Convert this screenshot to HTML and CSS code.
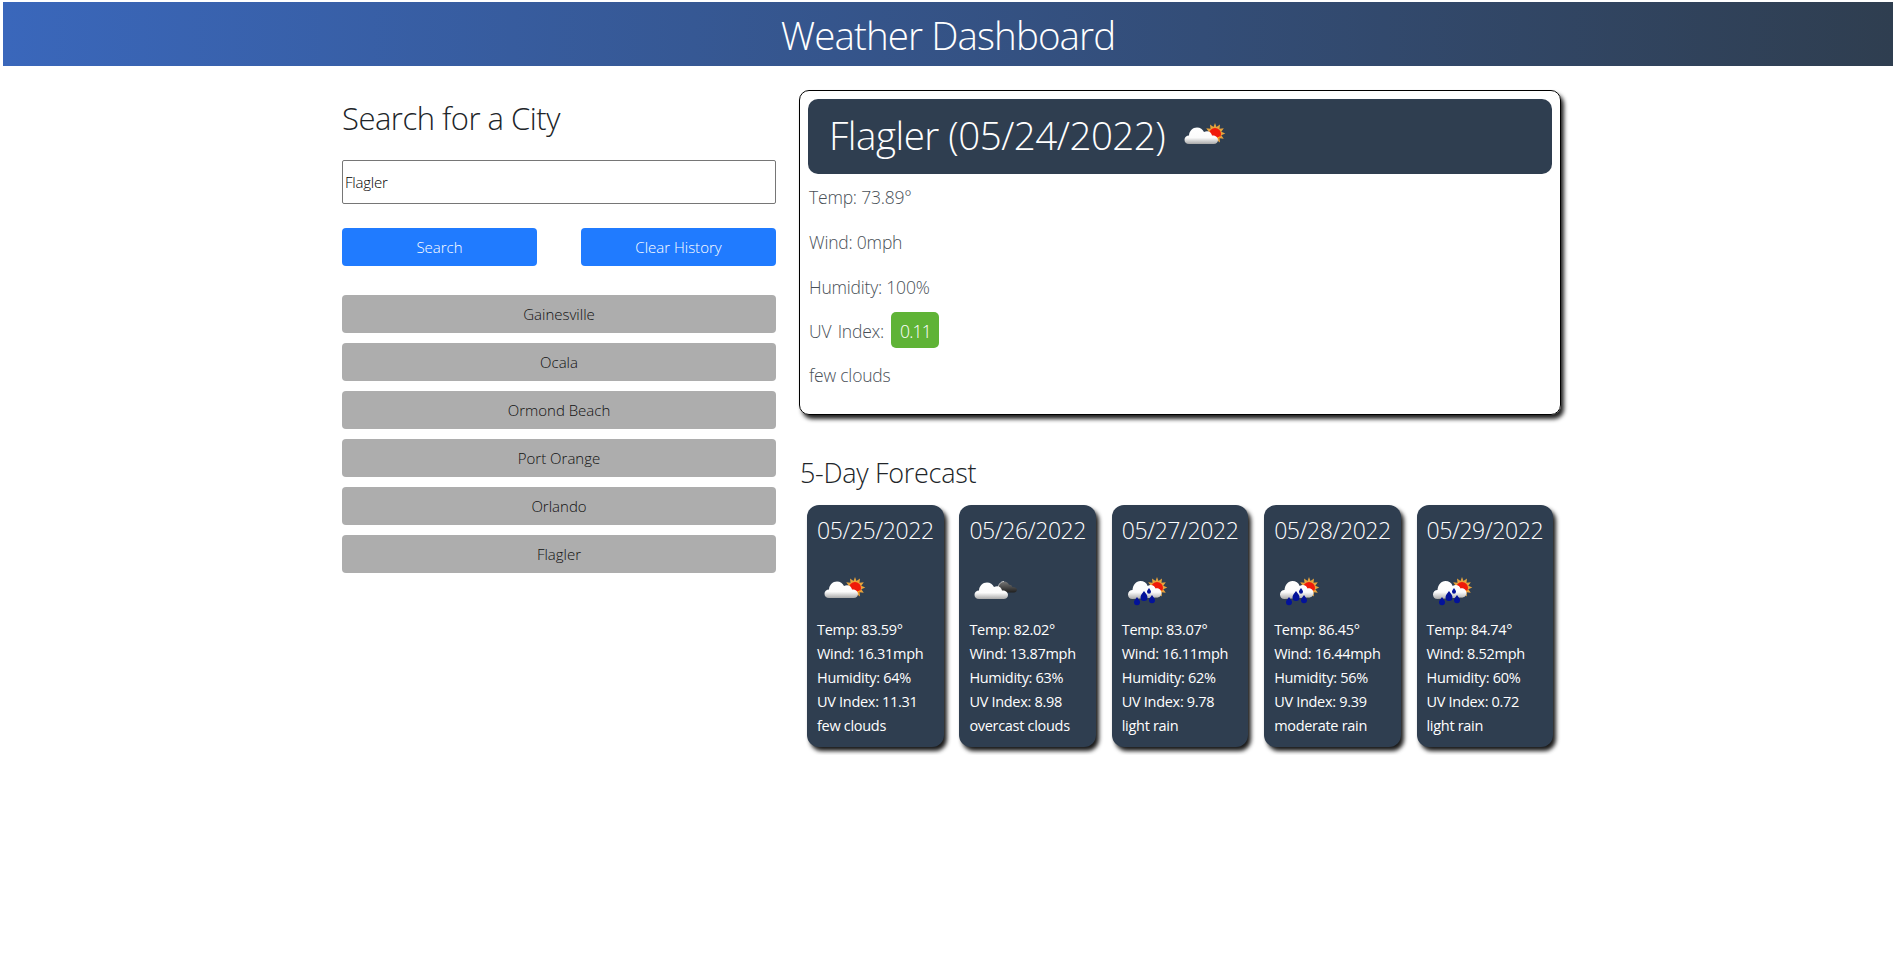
FILE: index.html
```html
<!DOCTYPE html>
<html lang="en">
<head>
    <meta charset="UTF-8">
    <title>Weather Dashboard</title>
    <link rel="stylesheet" href="styles.css">
</head>
<body>

<svg class="icon-defs" width="0" height="0" aria-hidden="true">
    <defs>
        <linearGradient id="cloudWhite" x1="0" y1="0" x2="0" y2="1">
            <stop offset="0" stop-color="#ffffff"/>
            <stop offset="0.62" stop-color="#fbfbfb"/>
            <stop offset="1" stop-color="#a9a9a9"/>
        </linearGradient>
        <linearGradient id="cloudDark" x1="0" y1="0" x2="0" y2="1">
            <stop offset="0" stop-color="#777777"/>
            <stop offset="1" stop-color="#1f1f1f"/>
        </linearGradient>
        <symbol id="sun" viewBox="0 0 50 50">
            <path fill="#e8a33c" d="M38 12l1.500 4 3.500-2.500-.5 4.300 4.300-.5-2.500 3.500 4 1.700-4 1.700 2.500 3.500-4.300-.5.500 4.300-3.500-2.500-1.500 4-1.500-4-3.500 2.500.5-4.300-4.300.5 2.500-3.500-4-1.700 4-1.700-2.500-3.500 4.300.5-.5-4.300 3.500 2.500z"/>
            <circle cx="38" cy="23" r="6" fill="#f01a0a"/>
            <path fill="#ffb020" d="M43.500 25a6 6 0 0 1-9 3.500l4-1z"/>
        </symbol>
        <symbol id="cloud" viewBox="0 0 50 50">
            <path fill="url(#cloudWhite)" d="M12 33c-3 0-4.500-2-4.500-4.300 0-2.500 2-4.300 4.500-4.300.3-4.500 3.700-7.900 8-7.900 3.200 0 5.800 1.700 7 4.600 1-.6 2-.8 3-.8 2.700 0 4.700 2 5 4.300 3.300-.3 6 1.700 6 4.300 0 2.500-2 4.100-4.500 4.100z"/>
        </symbol>
        <symbol id="few-clouds" viewBox="0 0 50 50">
            <use href="#sun"/>
            <use href="#cloud"/>
        </symbol>
        <symbol id="overcast" viewBox="0 0 50 50">
            <path fill="url(#cloudDark)" d="M27 27.500c-.5-2 .5-3.500 2-4 .3-4 2.700-7 6-7 2.500 0 4.300 1.300 5 3.300 1.500-.3 2.800.5 3.300 2.200 2.200-.2 4.700 1 4.700 2.700 0 1.500-1.500 2.800-3 2.800z"/>
            <path fill="none" stroke="#c9c9c9" stroke-width="1" d="M29 23.500c.3-4 2.700-7 6-7"/>
            <use href="#cloud" x="-2" y="1"/>
        </symbol>
        <symbol id="rain" viewBox="0 0 50 50">
            <use href="#sun" x="-3"/>
            <path fill="url(#cloudWhite)" d="M10.500 34c-3 0-4.500-2-4.500-4.500 0-2.600 2-4.500 4.500-4.500.3-5 3.500-9 8-9 3.300 0 6 1.900 7.200 4.900 1-.6 2-.8 3-.8 2.500 0 4 1.500 4.800 3.300 3.200-.5 6 1.500 6 4.500s-2.500 4.600-5 4.600z"/>
            <g fill="#03129a">
                <path d="M15 32c1.800 2.500 3 3.700 3 5.200a3 3 0 0 1-6 0c0-1.500 1.200-2.700 3-5.200z"/>
                <path d="M22 26c2.200 3 3.500 4.500 3.500 6.400a3.500 3.500 0 0 1-7 0c0-1.900 1.300-3.400 3.500-6.400z"/>
                <path d="M30 30c1.800 2.500 3 3.700 3 5.200a3 3 0 0 1-6 0c0-1.500 1.200-2.700 3-5.200z"/>
                <path d="M27 23c1.300 1.800 2 2.700 2 3.800a2 2 0 0 1-4 0c0-1.100.7-2 2-3.800z"/>
            </g>
        </symbol>
    </defs>
</svg>

<header class="page-header">
    <h1>Weather Dashboard</h1>
</header>

<main class="content">
    <section class="search-col">
        <h2 class="search-title">Search for a City</h2>
        <input class="city-input" type="text" value="Flagler">
        <div class="search-actions">
            <button class="btn-blue">Search</button>
            <button class="btn-blue">Clear History</button>
        </div>
        <div class="history">
            <button class="btn-history">Gainesville</button>
            <button class="btn-history">Ocala</button>
            <button class="btn-history">Ormond Beach</button>
            <button class="btn-history">Port Orange</button>
            <button class="btn-history">Orlando</button>
            <button class="btn-history">Flagler</button>
        </div>
    </section>

    <section class="weather-col">
        <div class="today">
            <div class="today-title">
                <h2>Flagler (05/24/2022)</h2>
                <svg class="today-icon"><use href="#few-clouds"/></svg>
            </div>
            <p>Temp: 73.89°</p>
            <p>Wind: 0mph</p>
            <p>Humidity: 100%</p>
            <p class="uv-line">UV Index: <span class="uv-badge">0.11</span></p>
            <p>few clouds</p>
        </div>

        <h3 class="forecast-title">5-Day Forecast</h3>
        <div class="forecast">
            <article class="day">
                <h4>05/25/2022</h4>
                <svg class="day-icon"><use href="#few-clouds"/></svg>
                <div>Temp: 83.59°</div>
                <div>Wind: 16.31mph</div>
                <div>Humidity: 64%</div>
                <div>UV Index: 11.31</div>
                <div>few clouds</div>
            </article>
            <article class="day">
                <h4>05/26/2022</h4>
                <svg class="day-icon"><use href="#overcast"/></svg>
                <div>Temp: 82.02°</div>
                <div>Wind: 13.87mph</div>
                <div>Humidity: 63%</div>
                <div>UV Index: 8.98</div>
                <div>overcast clouds</div>
            </article>
            <article class="day">
                <h4>05/27/2022</h4>
                <svg class="day-icon"><use href="#rain"/></svg>
                <div>Temp: 83.07°</div>
                <div>Wind: 16.11mph</div>
                <div>Humidity: 62%</div>
                <div>UV Index: 9.78</div>
                <div>light rain</div>
            </article>
            <article class="day">
                <h4>05/28/2022</h4>
                <svg class="day-icon"><use href="#rain"/></svg>
                <div>Temp: 86.45°</div>
                <div>Wind: 16.44mph</div>
                <div>Humidity: 56%</div>
                <div>UV Index: 9.39</div>
                <div>moderate rain</div>
            </article>
            <article class="day">
                <h4>05/29/2022</h4>
                <svg class="day-icon"><use href="#rain"/></svg>
                <div>Temp: 84.74°</div>
                <div>Wind: 8.52mph</div>
                <div>Humidity: 60%</div>
                <div>UV Index: 0.72</div>
                <div>light rain</div>
            </article>
        </div>
    </section>
</main>

</body>
</html>
```

FILE: styles.css
```css
* { box-sizing: border-box; }
body {
    margin: 0;
    background: #fff;
    color: #212529;
    font-family: "Open Sans", "Liberation Sans", sans-serif;
    font-weight: 300;
    font-size: 16px;
    line-height: 1.5;
}
h1, h2, h3, h4, p { margin: 0; font-weight: 300; }
.icon-defs { position: absolute; }

.page-header {
    margin: 2px 0 0 3px;
    height: 64px;
    background: linear-gradient(to right, #3a67bb, #2f3e50);
    color: #fff;
    text-align: center;
}
.page-header h1 { font-size: 38.5px; line-height: 66px; letter-spacing: -0.9px; }

.content {
    display: flex;
    gap: 23px;
    width: 1219px;
    margin: 24px 0 0 342px;
}

.search-col { width: 434px; }
.search-title { font-size: 31px; line-height: 56px; letter-spacing: -0.5px; }
.city-input {
    display: block;
    width: 100%;
    height: 44px;
    margin-top: 14px;
    padding: 0 2px;
    border: 1px solid #767676;
    border-radius: 2px;
    font: inherit;
    font-size: 15px;
    letter-spacing: -0.2px;
    color: #000;
}
.search-actions {
    display: flex;
    justify-content: space-between;
    margin-top: 24px;
}
.search-actions button { width: 195px; }
button {
    height: 38px;
    border: none;
    border-radius: 4px;
    font: inherit;
    font-size: 15px;
    cursor: pointer;
}
.btn-blue { background-color: #207bff; color: #fff; }
.history { display: flex; flex-direction: column; gap: 10px; margin-top: 29px; }
.btn-history { width: 100%; background-color: #adadad; color: #111; }

.weather-col { width: 762px; }
.today {
    height: 325px;
    padding: 8px;
    border: 1px solid #000;
    border-radius: 10px;
    box-shadow: 3px 4px 4px #222;
    font-size: 17.5px;
    letter-spacing: -0.2px;
    color: #495057;
}
.today-title {
    display: flex;
    align-items: center;
    gap: 12px;
    height: 75px;
    margin-bottom: 1px;
    padding: 0 0 2px 21px;
    border-radius: 10px;
    background-color: #2f3e50;
    color: #fff;
}
.today-title h2 { font-size: 38.5px; letter-spacing: -0.5px; }
.today-icon { width: 50px; height: 50px; }
.today p { height: 45px; padding-left: 1px; line-height: 45px; }
.today .uv-line { height: 43px; line-height: 43px; word-spacing: 2px; }
.uv-badge {
    display: inline-block;
    height: 36px;
    margin-left: 1px;
    padding: 0 8.5px;
    border-radius: 5px;
    background-color: #5fb336;
    color: #fff;
    line-height: 39px;
    letter-spacing: -0.8px;
}

.forecast-title { margin-top: 37px; padding-left: 1px; font-size: 27px; line-height: 42px; letter-spacing: -0.3px; }
.forecast {
    display: flex;
    justify-content: space-between;
    margin: 11px 8px 8px;
}
.day {
    width: 136.5px;
    height: 242px;
    padding: 10px;
    border-radius: 12px;
    background-color: #2f3e50;
    box-shadow: 3px 4px 4px #1a1a1a;
    color: #fff;
    font-size: 14.5px;
    font-weight: 400;
    line-height: 24px;
    letter-spacing: -0.3px;
    white-space: nowrap;
}
.day h4 { font-size: 23px; line-height: 30px; letter-spacing: -0.4px; }
.day-icon { display: block; width: 50px; height: 50px; margin: 20px 0 3px; }
```
